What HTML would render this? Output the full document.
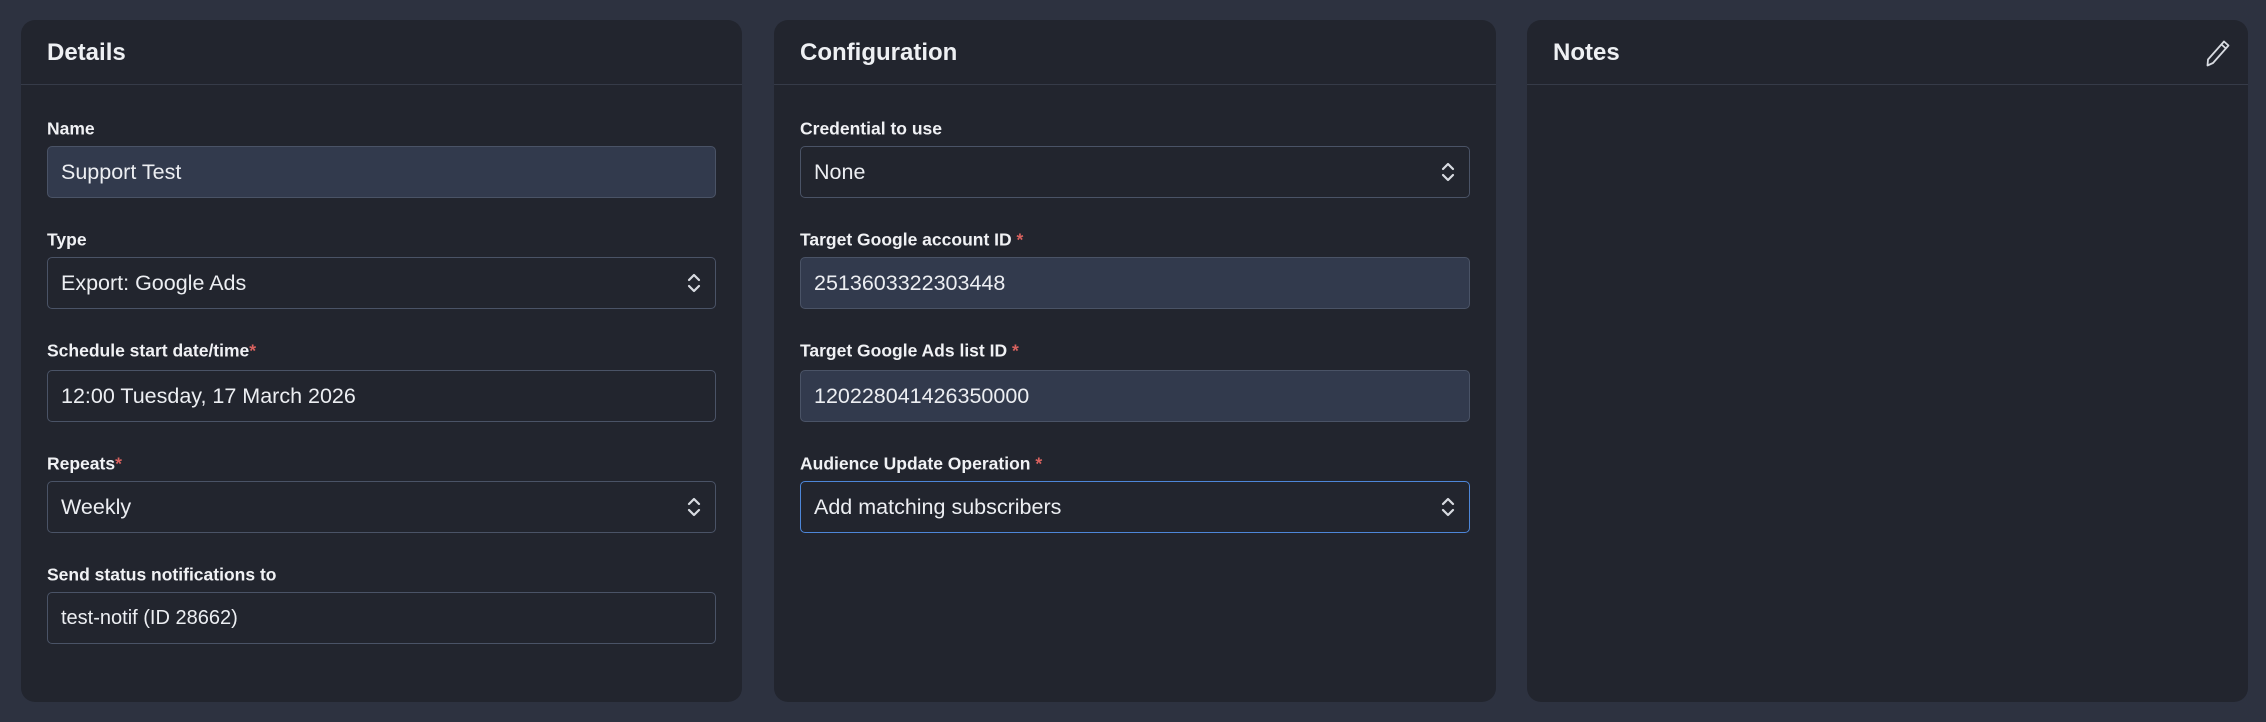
<!DOCTYPE html>
<html><head><style>
*{box-sizing:border-box;margin:0;padding:0}
body{width:2266px;height:722px;background:#2d3240;font-family:"Liberation Sans",sans-serif;position:relative;overflow:hidden}
.card{position:absolute;top:20px;height:682px;width:721px;background:#22252e;border-radius:14px}
.hd{height:65px;border-bottom:1px solid #363b48;padding-left:26px;color:#eef0f3;font-size:24px;font-weight:700;line-height:66px;position:relative}
.lbl{position:absolute;left:26px;color:#f0f1f4;font-size:17.5px;font-weight:700;transform:translateY(-50%)}
.lbl i{color:#d9625f;font-style:normal}
.in{position:absolute;left:26px;right:26px;height:52px;border:1.5px solid #4a5366;border-radius:5px;color:#eceef2;font-size:21.5px;line-height:50px;padding-left:13px}
.f{background:#323a4d}
.foc{border-color:#4d86d8}
.chev{position:absolute;right:14px;top:14px}
</style></head><body>
<div class="card" style="left:21px">
<div class="hd">Details</div>
<div class="lbl" style="top:109px">Name</div>
<div class="in f" style="top:126px">Support Test</div>
<div class="lbl" style="top:220px">Type</div>
<div class="in" style="top:237px">Export: Google Ads<svg class="chev" width="14" height="22" viewBox="0 0 14 22"><path d="M2 8l5-5 5 5M2 14l5 5 5-5" fill="none" stroke="#d8dbe1" stroke-width="2.2" stroke-linecap="round" stroke-linejoin="round"/></svg></div>
<div class="lbl" style="top:331px">Schedule start date/time<i>*</i></div>
<div class="in" style="top:350px">12:00 Tuesday, 17 March 2026</div>
<div class="lbl" style="top:444px">Repeats<i>*</i></div>
<div class="in" style="top:461px">Weekly<svg class="chev" width="14" height="22" viewBox="0 0 14 22"><path d="M2 8l5-5 5 5M2 14l5 5 5-5" fill="none" stroke="#d8dbe1" stroke-width="2.2" stroke-linecap="round" stroke-linejoin="round"/></svg></div>
<div class="lbl" style="top:555px">Send status notifications to</div>
<div class="in" style="top:572px;font-size:20px">test-notif (ID 28662)</div>
</div>
<div class="card" style="left:774px;width:722px">
<div class="hd">Configuration</div>
<div class="lbl" style="top:109px">Credential to use</div>
<div class="in" style="top:126px">None<svg class="chev" width="14" height="22" viewBox="0 0 14 22"><path d="M2 8l5-5 5 5M2 14l5 5 5-5" fill="none" stroke="#d8dbe1" stroke-width="2.2" stroke-linecap="round" stroke-linejoin="round"/></svg></div>
<div class="lbl" style="top:220px">Target Google account ID <i>*</i></div>
<div class="in f" style="top:237px">2513603322303448</div>
<div class="lbl" style="top:331px">Target Google Ads list ID <i>*</i></div>
<div class="in f" style="top:350px">120228041426350000</div>
<div class="lbl" style="top:444px">Audience Update Operation <i>*</i></div>
<div class="in foc" style="top:461px">Add matching subscribers<svg class="chev" width="14" height="22" viewBox="0 0 14 22"><path d="M2 8l5-5 5 5M2 14l5 5 5-5" fill="none" stroke="#d8dbe1" stroke-width="2.2" stroke-linecap="round" stroke-linejoin="round"/></svg></div>
</div>
<div class="card" style="left:1527px">
<div class="hd">Notes<svg style="position:absolute;right:16px;top:18px" width="30" height="30" viewBox="0 0 30 30"><path d="M22 3.5l4.5 4L11 25l-5.5 2.5 0.5-6z M19.5 6.5l4.5 4" fill="none" stroke="#d8dbe1" stroke-width="1.8" stroke-linejoin="round"/></svg></div>
</div>
</body></html>
